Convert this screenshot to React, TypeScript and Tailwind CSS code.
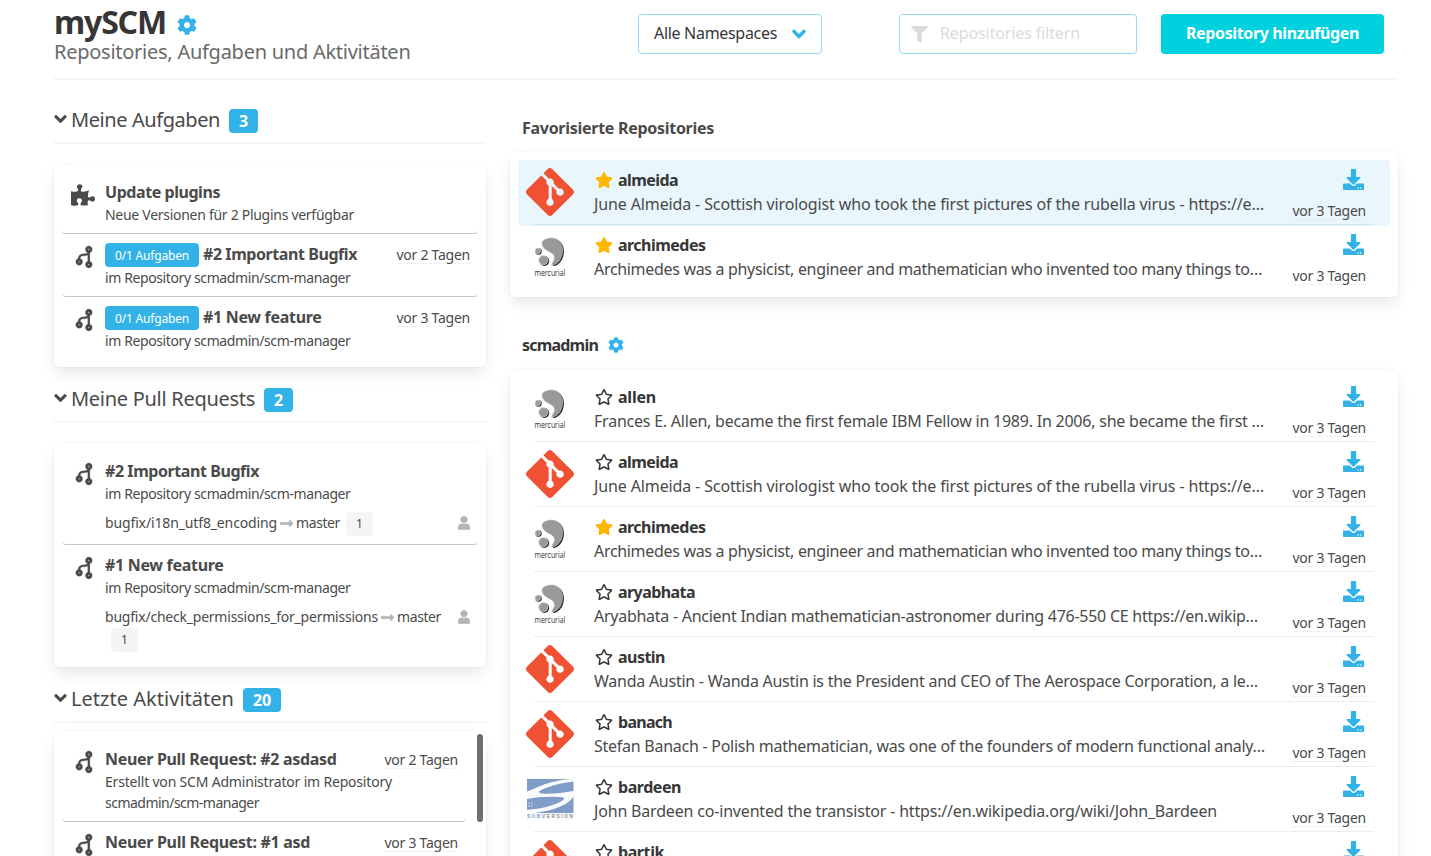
import React, { useLayoutEffect, useRef, useState } from "react";
import {
  FaAngleDown,
  FaCodeBranch,
  FaCog,
  FaDownload,
  FaFilter,
  FaLongArrowAltRight,
  FaPuzzlePiece,
  FaRegStar,
  FaStar,
  FaUser,
} from "react-icons/fa";
import { SiGit } from "react-icons/si";

/** Single line of text whose letter spacing is computed so that it sets to `w` pixels. */
function Line({ w, className = "", children }: { w: number; className?: string; children: string }) {
  const ref = useRef<HTMLSpanElement>(null);
  const [spacing, setSpacing] = useState(0);
  useLayoutEffect(() => {
    const el = ref.current;
    if (!el) return;
    el.style.letterSpacing = "0px";
    const natural = el.getBoundingClientRect().width;
    const next = (w - natural) / children.length;
    el.style.letterSpacing = `${next}px`;
    setSpacing(next);
  }, [w, children]);
  return (
    <span ref={ref} className={`inline-block whitespace-pre ${className}`} style={{ letterSpacing: `${spacing}px` }}>
      {children}
    </span>
  );
}

function GitLogo() {
  return <SiGit className="size-12 text-[#f05133]" />;
}

const BLOB =
  "M16 9.6C16.6 6.4 22 4.6 27 5C33.4 5.8 37 11.5 36.6 18.6C36 26 32 31.6 25.8 32.2C25 30.8 28.6 28 28.4 24.2C28 20.6 25 19.4 21 17.2C17.5 15.2 15.6 12.6 16 9.6Z";

function MercurialLogo() {
  return (
    <svg viewBox="0 0 48 48" className="size-12">
      <g fill="#222">
        <path d={BLOB} transform="translate(1.3 0.9)" />
        <circle cx="18.3" cy="28" r="4.9" />
        <circle cx="12.5" cy="18.5" r="3.2" />
      </g>
      <path d={BLOB} fill="#999" stroke="#c4c4c4" strokeWidth="0.5" />
      <g fill="#999" stroke="#ddd" strokeWidth="0.7">
        <circle cx="17.3" cy="27.2" r="4.6" />
        <circle cx="11.8" cy="17.9" r="2.7" />
      </g>
      <text x="8.6" y="42.8" fontSize="9.6" textLength="30.6" lengthAdjust="spacingAndGlyphs" fill="#333" fontFamily="'Open Sans', sans-serif">
        mercurial
      </text>
    </svg>
  );
}

function SubversionLogo() {
  return (
    <svg viewBox="0 0 48 48" className="size-12">
      <rect x="0.5" y="2.5" width="47" height="42.5" fill="#f9fbfb" />
      <g fill="#809cc9">
        <path d="M1 4H45C30 5.5 20 8.3 13 11.6C9 13.6 4 15.5 1 16.6Z" />
        <path d="M47.5 6.5C34 8 20 12 13.5 16C12 17.5 14 18.5 18 18.7C28 19 38 17.5 47.5 16Z" />
        <path d="M1 24C12 21.8 30 21.2 37 22.4C39.5 23.3 37 25.5 32 28C24 31.8 10 34.4 1 34.8Z" />
        <path d="M47.5 21.5V38H9C24 36 42 31 47.5 21.5Z" />
      </g>
      <path d="M2.5 28H4M5 28H6.5M2.5 31H4M5 31H6.5" stroke="#dfe7f3" strokeWidth="1" />
      <text x="1" y="43.4" fontSize="4.8" textLength="46" fontWeight="700" fill="#8b8f96" fontFamily="'Liberation Sans', sans-serif">
        <tspan fill="#7f97c4">SUB</tspan>VERSION
      </text>
    </svg>
  );
}

type Kind = "git" | "hg" | "svn";
type Repo = { kind: Kind; name: string; nameW: number; text: string; textW: number; fav?: boolean };

const almeida: Repo = {
  kind: "git",
  name: "almeida",
  nameW: 60,
  text: "June Almeida - Scottish virologist who took the first pictures of the rubella virus - https://e…",
  textW: 670,
};
const archimedes: Repo = {
  kind: "hg",
  name: "archimedes",
  nameW: 87.5,
  text: "Archimedes was a physicist, engineer and mathematician who invented too many things to…",
  textW: 668,
  fav: true,
};

const repos: Repo[] = [
  {
    kind: "hg",
    name: "allen",
    nameW: 38,
    text: "Frances E. Allen, became the first female IBM Fellow in 1989. In 2006, she became the first …",
    textW: 670,
  },
  almeida,
  archimedes,
  {
    kind: "hg",
    name: "aryabhata",
    nameW: 77,
    text: "Aryabhata - Ancient Indian mathematician-astronomer during 476-550 CE https://en.wikip…",
    textW: 664,
  },
  {
    kind: "git",
    name: "austin",
    nameW: 47,
    text: "Wanda Austin - Wanda Austin is the President and CEO of The Aerospace Corporation, a le…",
    textW: 664,
  },
  {
    kind: "git",
    name: "banach",
    nameW: 54,
    text: "Stefan Banach - Polish mathematician, was one of the founders of modern functional analy…",
    textW: 671,
  },
  {
    kind: "svn",
    name: "bardeen",
    nameW: 63,
    text: "John Bardeen co-invented the transistor - https://en.wikipedia.org/wiki/John_Bardeen",
    textW: 623,
  },
  { kind: "git", name: "bartik", nameW: 46, text: "", textW: 0 },
];

function Ago({ days, className = "" }: { days: number; className?: string }) {
  return (
    <span className={`block h-[18px] border-b border-dotted border-[#e4e4e4] text-sm leading-[18px] ${className}`}>
      <Line w={73.5}>{`vor ${days} Tagen`}</Line>
    </span>
  );
}

function RepoRow({ repo, active, last }: { repo: Repo; active?: boolean; last?: boolean }) {
  return (
    <div className={`h-[65px] rounded ${active ? "bg-[#e9f6fc] shadow-[0_1px_0_#e9f6fc]" : ""}`}>
      <div className="flex h-16 px-2 pt-2">
        {repo.kind === "git" ? <GitLogo /> : repo.kind === "hg" ? <MercurialLogo /> : <SubversionLogo />}
        <div className="ml-5 flex-1">
          <div className="flex h-6 items-center">
            {repo.fav ? (
              <FaStar className="mr-[5px] ml-px h-4 w-[18px] text-[#ffb600]" />
            ) : (
              <FaRegStar className="mr-[5px] ml-px h-4 w-[18px] text-[#363636]" />
            )}
            <Line w={repo.nameW} className="text-base leading-6 font-bold text-[#363636]">
              {repo.name}
            </Line>
          </div>
          {repo.text && (
            <div className="h-6 leading-6">
              <Line w={repo.textW} className="text-base leading-6">
                {repo.text}
              </Line>
            </div>
          )}
        </div>
        <div className="mr-4 flex flex-col items-end">
          <FaDownload className="mt-px mr-0.5 size-[21px] text-[#33b2e8]" />
          <Ago days={3} className="mt-3" />
        </div>
      </div>
      {!last && <div className={`mx-4 h-px ${active ? "bg-[#d3e7f1]" : "bg-[#ededed]"}`} />}
    </div>
  );
}

function Card({ className = "", children }: { className?: string; children: React.ReactNode }) {
  return (
    <div className={`rounded-md bg-white p-2 shadow-[0_8px_16px_-2px_rgba(10,10,10,0.1),0_0_0_1px_rgba(10,10,10,0.02)] ${className}`}>{children}</div>
  );
}

function SectionTitle({ title, w, count, className = "" }: { title: string; w: number; count: number; className?: string }) {
  return (
    <div className={`flex h-9 border-b-2 border-[#f5f5f5] ${className}`}>
      <FaAngleDown className="mt-px h-5 w-[13px] text-[#4a4a4a]" />
      <Line w={w} className="ml-1 h-6 text-xl leading-6">
        {title}
      </Line>
      <span className="mt-px ml-[9px] flex h-6 items-center rounded bg-[#33b2e8] px-2.5 text-base leading-6 font-bold text-white">
        <Line w={count > 9 ? 18 : 9}>{String(count)}</Line>
      </span>
    </div>
  );
}

function Item({ icon, border = true, children }: { icon?: React.ReactNode; border?: boolean; children: React.ReactNode }) {
  return (
    <div className={`flex py-2 ${border ? "rounded border-b border-[#c4c6c7]" : ""}`}>
      <div className="flex w-[43px] shrink-0 justify-end pt-1 pr-3">
        {icon ?? <FaCodeBranch strokeWidth={6} className="h-[22px] w-[18px] rotate-180 overflow-visible text-[#4a4a4a]" />}
      </div>
      <div className="min-w-0 flex-1">{children}</div>
    </div>
  );
}

function Bold({ w, className = "leading-6", children }: { w: number; className?: string; children: string }) {
  return (
    <Line w={w} className={`h-6 text-base font-bold ${className}`}>
      {children}
    </Line>
  );
}

function Small({ w, children }: { w: number; children: string }) {
  return (
    <div className="h-[21px] leading-[21px]">
      <Line w={w} className="text-sm leading-[21px]">
        {children}
      </Line>
    </div>
  );
}

function Task({ title, w, days, border }: { title: string; w: number; days: number; border?: boolean }) {
  return (
    <Item border={border}>
      <div className="flex h-[25px]">
        <span className="mt-px flex h-6 w-[94px] items-center justify-center rounded bg-[#33b2e8] text-xs text-white">
          <Line w={74} className="mt-px">
            0/1 Aufgaben
          </Line>
        </span>
        <span className="ml-1 flex-1">
          <Bold w={w} className="leading-[23px]">
            {title}
          </Bold>
        </span>
        <Ago days={days} className="mt-1 mr-2" />
      </div>
      <Small w={245.5}>im Repository scmadmin/scm-manager</Small>
    </Item>
  );
}

function Pull({ title, w, branch, branchW, border }: { title: string; w: number; branch: string; branchW: number; border?: boolean }) {
  return (
    <Item border={border}>
      <div className="flex h-6">
        <Bold w={w}>{title}</Bold>
      </div>
      <Small w={245.5}>im Repository scmadmin/scm-manager</Small>
      <div className="flex pt-2">
        <div className="flex flex-1 flex-wrap items-start text-sm">
          <Line w={branchW} className="leading-[22px]">
            {branch}
          </Line>
          <FaLongArrowAltRight strokeWidth={10} className="mx-[3px] mt-1 h-[15px] w-[13px] text-[#b5b5b5]" />
          <Line w={44} className="leading-[22px]">
            master
          </Line>
          <span className="ml-1.5 flex h-6 w-[27px] items-center justify-center rounded bg-[#f5f5f5] text-xs">1</span>
        </div>
        <FaUser className="mt-1 mr-2 h-3.5 w-3 text-[#b5b5b5]" strokeWidth={16} />
      </div>
    </Item>
  );
}

function Activity({ title, w, days }: { title: string; w: number; days: number }) {
  return (
    <Item>
      <div className="flex h-6 justify-between">
        <Bold w={w}>{title}</Bold>
        <Ago days={days} className="mt-1 mr-2" />
      </div>
      <Small w={287}>Erstellt von SCM Administrator im Repository</Small>
      <Small w={154}>scmadmin/scm-manager</Small>
    </Item>
  );
}

export default function App() {
  return (
    <div className="h-[856px] w-[1431px] overflow-hidden bg-white pr-[33px] pl-[54px] font-['Noto_Sans','Open_Sans',sans-serif] text-[#4a4a4a]">
      <header className="flex h-20 border-b-2 border-[#f5f5f5]">
        <div className="w-[584px]">
          <div className="flex h-10 items-center">
            <Line w={112} className="mt-[3px] text-[32px] leading-[44px] font-bold text-[#363636]">
              mySCM
            </Line>
            <FaCog className="mt-2.5 ml-[11px] size-5 text-[#33b2e8]" />
          </div>
          <Line w={356.5} className="text-xl leading-[23px] text-[#6a6a6a]">
            Repositories, Aufgaben und Aktivitäten
          </Line>
        </div>
        <div className="mt-3.5 flex h-10 w-[184px] items-center rounded border border-[#98d8f3] pl-[15px] text-base text-[#363636]">
          <Line w={123} className="-mt-0.5">
            Alle Namespaces
          </Line>
          <FaAngleDown className="ml-[15px] h-[22px] w-3.5 text-[#33b2e8]" />
        </div>
        <div className="mt-3.5 ml-[77px] flex h-10 w-[238px] items-center rounded border border-[#98d8f3] pl-[11px] text-base text-[#dbdbdb]">
          <FaFilter className="size-[17px]" />
          <Line w={140} className="-mt-0.5 ml-3">
            Repositories filtern
          </Line>
        </div>
        <button className="mt-3.5 ml-6 h-10 w-[223px] rounded bg-[#00d1df] pb-0.5 text-base font-bold text-white">
          <Line w={173}>Repository hinzufügen</Line>
        </button>
      </header>

      <main className="flex gap-6">
        <div className="w-[432px]">
          <SectionTitle title="Meine Aufgaben" w={149} count={3} className="mt-[28px]" />
          <Card className="mt-5 h-[203px]">
            <Item icon={<FaPuzzlePiece className="-mt-px -mr-0.5 h-[24px] w-6 text-[#4a4a4a]" />}>
              <div className="flex h-6">
                <Bold w={115}>Update plugins</Bold>
              </div>
              <Small w={249}>Neue Versionen für 2 Plugins verfügbar</Small>
            </Item>
            <Task title="#2 Important Bugfix" w={154} days={2} />
            <Task title="#1 New feature" w={118.5} days={3} border={false} />
          </Card>

          <SectionTitle title="Meine Pull Requests" w={184} count={2} className="mt-5" />
          <Card className="mt-5 h-56">
            <Pull title="#2 Important Bugfix" w={154} branch="bugfix/i18n_utf8_encoding" branchW={172} />
            <Pull title="#1 New feature" w={118.5} branch="bugfix/check_permissions_for_permissions" branchW={273} border={false} />
          </Card>

          <SectionTitle title="Letzte Aktivitäten" w={163} count={20} className="mt-5" />
          <Card className="mt-2 flex h-[400px] justify-between">
            <div className="w-[404px]">
              <Activity title="Neuer Pull Request: #2 asdasd" w={231.5} days={2} />
              <Activity title="Neuer Pull Request: #1 asd" w={205} days={3} />
            </div>
            <div className="-mt-[5px] -mr-[5px] h-[88px] w-1.5 rounded-full bg-[#6e6e6e]" />
          </Card>
        </div>

        <div className="w-[888px]">
          <h2 className="mt-9 ml-3 h-6 text-base leading-6 font-bold">
            <Line w={192}>Favorisierte Repositories</Line>
          </h2>
          <Card className="mt-3 h-[145px]">
            <RepoRow repo={{ ...almeida, fav: true }} active />
            <RepoRow repo={archimedes} last />
          </Card>
          <h2 className="mt-9 ml-3 flex h-6 items-center text-base leading-6 font-bold text-[#363636]">
            <Line w={76} className="-mt-px">
              scmadmin
            </Line>
            <FaCog className="ml-2.5 size-4 text-[#33b2e8]" />
          </h2>
          <Card className="mt-3">
            {repos.map((r) => (
              <RepoRow key={r.name} repo={r} />
            ))}
          </Card>
        </div>
      </main>
    </div>
  );
}
